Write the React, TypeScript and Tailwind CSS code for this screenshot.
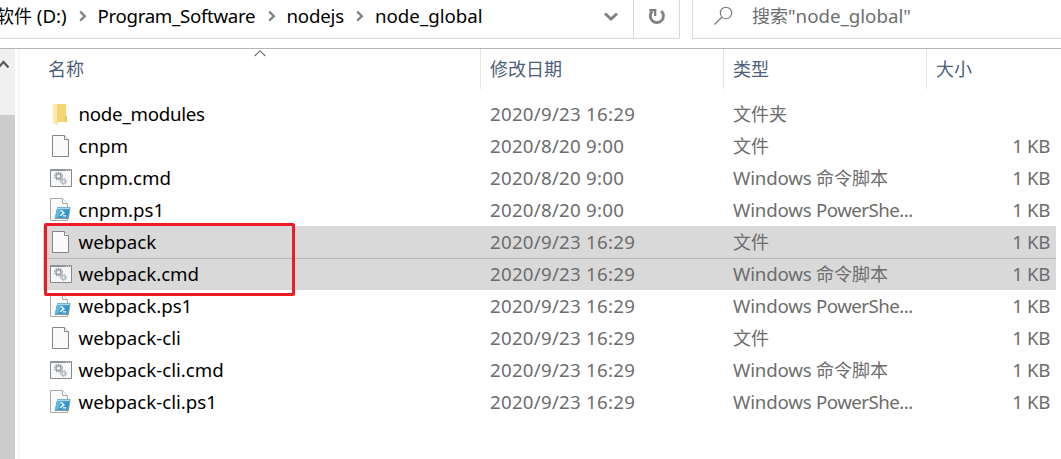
import type { ReactNode } from "react";

type Kind = "folder" | "file" | "cmd" | "ps1";
type Entry = { name: string; kind: Kind; date: string; selected?: boolean };

const entries: Entry[] = [
  { name: "node_modules", kind: "folder", date: "2020/9/23 16:29" },
  { name: "cnpm", kind: "file", date: "2020/8/20 9:00" },
  { name: "cnpm.cmd", kind: "cmd", date: "2020/8/20 9:00" },
  { name: "cnpm.ps1", kind: "ps1", date: "2020/8/20 9:00" },
  { name: "webpack", kind: "file", date: "2020/9/23 16:29", selected: true },
  { name: "webpack.cmd", kind: "cmd", date: "2020/9/23 16:29", selected: true },
  { name: "webpack.ps1", kind: "ps1", date: "2020/9/23 16:29" },
  { name: "webpack-cli", kind: "file", date: "2020/9/23 16:29" },
  { name: "webpack-cli.cmd", kind: "cmd", date: "2020/9/23 16:29" },
  { name: "webpack-cli.ps1", kind: "ps1", date: "2020/9/23 16:29" },
];

const Zh = ({ children }: { children: ReactNode }) => (
  <span className="text-[18px] tracking-normal">{children}</span>
);

const typeLabels: Record<Kind, ReactNode> = {
  folder: <Zh>文件夹</Zh>,
  file: <Zh>文件</Zh>,
  cmd: <><span className="tracking-[-0.2px]">Windows </span><Zh>命令脚本</Zh></>,
  ps1: <><span className="tracking-[-0.2px]">Windows </span><span className="tracking-[-0.55px]">PowerShe...</span></>,
};

function FolderIcon() {
  return (
    <svg width="24" height="32" viewBox="0 0 24 32" className="shrink-0">
      <path d="M7 6H17V18L18 19V24H7Z" fill="#f7d577" />
      <path d="M16 18h2v6h-2z" fill="#eec75f" />
      <path d="M4 6h4v2.5L9 9v18.5L4 25Z" fill="#fce9ab" />
      <path d="M8.5 9v15" stroke="#f2cb67" strokeWidth=".8" />
    </svg>
  );
}

function FileIcon() {
  return (
    <svg width="24" height="32" viewBox="0 0 24 32" className="shrink-0">
      <path d="M3.5 5.5H15.5L19.5 9.5V26.5H3.5Z" fill="#fafafa" stroke="#858585" />
      <path d="M15.5 5.5V9.5H19.5" fill="#fff" stroke="#858585" />
    </svg>
  );
}

function CmdIcon() {
  return (
    <svg width="24" height="32" viewBox="0 0 24 32" className="shrink-0">
      <path d="M1.5 8H22.5V24.5H1.5Z" fill="#f8f8f8" stroke="#858a90" />
      <path d="M1 7.3H23V8.9H1Z" fill="#858a90" />
      <path d="M17 8.2h1m1 0h1m1 0h1" stroke="#fff" strokeWidth=".8" />
      <circle cx="9.5" cy="14.2" r="4" fill="none" stroke="#979ca2" strokeWidth="1.1" strokeDasharray="1.5 1.02" />
      <circle cx="9.5" cy="14.2" r="2.6" fill="#d6d9dc" stroke="#8b9096" strokeWidth="1.1" />
      <circle cx="9.5" cy="14.2" r="1" fill="#fff" />
      <circle cx="14.6" cy="19.5" r="3" fill="none" stroke="#a5aeb6" strokeWidth="1" strokeDasharray="1.2 .8" />
      <circle cx="14.6" cy="19.5" r="1.9" fill="#eef1f3" stroke="#94a0aa" />
    </svg>
  );
}

function Ps1Icon() {
  return (
    <svg width="24" height="32" viewBox="0 0 24 32" className="shrink-0">
      <path d="M1.5 4.5H13.5L18.5 9.5V26.5H1.5Z" fill="#fafafa" stroke="#a9a9a9" />
      <path d="M13.5 4.5V9.5H18.5" fill="#fff" stroke="#a9a9a9" />
      <path d="M8.2 13H21.6L19.8 25H5.8Z" fill="#8097a5" />
      <path d="M8.4 13.6H20.8L18.6 23.6H6.2Z" fill="#3097cb" />
      <path d="M8.4 13.6H20.8L20.5 15.2H8Z" fill="#a9d6e9" />
      <path d="M8 15.2H13L9 23.6H6.2Z" fill="#5bbbe2" />
      <path d="M12 16.3 14.9 18.9 11.2 21.7M14 21.9h3.2" fill="none" stroke="#fff" strokeWidth="1.4" />
    </svg>
  );
}

const icons: Record<Kind, () => ReactNode> = { folder: FolderIcon, file: FileIcon, cmd: CmdIcon, ps1: Ps1Icon };

function Crumb() {
  return (
    <svg width="8" height="12" viewBox="0 0 8 12" className="shrink-0">
      <path d="M1.2 1.7 5.8 6.2 1.2 10.7" fill="none" stroke="#858585" strokeWidth="2.4" />
    </svg>
  );
}

function AddressBar() {
  return (
    <div className="flex h-[39px] shrink-0">
      <div className="flex w-[634px] items-center border-r border-b border-[#d9d9d9] pb-[6px] text-black">
        <div className="flex w-[79px] shrink-0 items-center">
          <span className="-ml-[4px] whitespace-pre"><Zh>软件</Zh> (D:)</span>
        </div>
        <Crumb />
        <span className="ml-[10.5px] w-[170px] shrink-0 tracking-[-0.32px]">Program_Software</span>
        <Crumb />
        <span className="ml-[11px] w-[69.5px] shrink-0 tracking-[-0.2px]">nodejs</span>
        <Crumb />
        <span className="ml-[11px] flex-1">node_global</span>
        <svg width="16" height="12" viewBox="0 0 16 12" className="mr-[14px]">
          <path d="M2 3.5 8 9 14 3.5" fill="none" stroke="#808080" strokeWidth="2.8" />
        </svg>
      </div>
      <div className="flex w-[46px] justify-center border-r border-b border-[#d9d9d9] pt-[7px]">
        <svg width="20" height="20" viewBox="0 0 20 20">
          <path d="M14.2 4A6.6 6.6 0 1 1 5.2 4.3" fill="none" stroke="#808080" strokeWidth="2.8" />
          <path d="M2.5 2H9.3V9H7V4.6H2.5Z" fill="#808080" />
        </svg>
      </div>
      <div className="ml-[12px] flex flex-1 items-center border-b border-l border-[#d9d9d9] pb-[6px] text-[#6d6d6d]">
        <svg width="20" height="20" viewBox="0 0 20 20" className="ml-[20px]">
          <circle cx="13" cy="7" r="5.7" fill="none" stroke="#777" strokeWidth="1.1" />
          <path d="M9 11 1.5 18.5" stroke="#777" strokeWidth="1.3" />
        </svg>
        <span className="ml-[19px]"><Zh>搜索</Zh>"node_global"</span>
      </div>
    </div>
  );
}

function Header() {
  return (
    <div className="relative flex h-[40px] shrink-0 text-[#4c607a]">
      <div className="flex w-[461px] items-center border-r border-[#e5e5e5] pl-[28px]"><Zh>名称</Zh></div>
      <div className="flex w-[243px] items-center border-r border-[#e5e5e5] pl-[9px]"><Zh>修改日期</Zh></div>
      <div className="flex w-[203px] items-center border-r border-[#e5e5e5] pl-[9px]"><Zh>类型</Zh></div>
      <div className="flex items-center pl-[9px]"><Zh>大小</Zh></div>
      <svg width="12" height="7" viewBox="0 0 12 7" className="absolute top-[1px] left-[233.5px]">
        <path d="M.7 6 6 .9 11.3 6" fill="none" stroke="#6b6b6b" strokeWidth="1.1" />
      </svg>
    </div>
  );
}

function Row({ entry }: { entry: Entry }) {
  const Icon = icons[entry.kind];
  return (
    <div className={`flex h-[32px] items-center pl-[6px] ${entry.selected ? "bg-[#d9d9d9]" : ""} ${entry.name === "webpack.cmd" ? "border-t border-[#b9b9b9] *:-mt-px" : ""}`}>
      <Icon />
      <span className={`w-[417px] shrink-0 pl-[5.5px] text-black ${entry.kind === "folder" ? "tracking-[-0.25px]" : ""}`}>{entry.name}</span>
      <span className="w-[243px] shrink-0 tracking-[0.25px]">{entry.date}</span>
      <span className="w-[203px] shrink-0 whitespace-pre">{typeLabels[entry.kind]}</span>
      <span className="flex-1 pr-[6px] text-right tracking-[-0.4px]">{entry.kind === "folder" ? "" : "1 KB"}</span>
    </div>
  );
}

export default function App() {
  return (
    <div className="flex h-[459px] w-[1061px] flex-col overflow-hidden bg-white font-['Noto_Sans','Noto_Sans_CJK_SC',sans-serif] text-[18.7px] leading-[26px]">
      <AddressBar />
      <div className="mt-[9px] flex min-h-0 flex-1 border-t border-[#b5b5b5]">
        <div className="flex w-[15px] shrink-0 flex-col bg-[#f0f0f0]">
          <div className="h-[66px] pt-[10px]">
            <svg width="10" height="10" viewBox="0 0 10 10">
              <path d="M-1.5 8.5 3.5 3 8.5 8.5" fill="none" stroke="#5a5a5a" strokeWidth="2.3" />
            </svg>
          </div>
          <div className="flex-1 bg-[#cdcdcd]" />
        </div>
        <div className="ml-[3px] w-[2px] shrink-0 bg-[#f5f5f5]" />
        <div className="flex min-w-0 flex-1 flex-col">
          <Header />
          <div className="relative mt-[9px] mr-[5px] ml-[23px] flex flex-col text-[#6d6d6d]">
            {entries.map((entry) => <Row key={entry.name} entry={entry} />)}
            <div className="absolute top-[125px] left-px h-[73px] w-[251px] rounded-[2px] border-[3px] border-[#ed1c24]" />
          </div>
        </div>
      </div>
    </div>
  );
}
